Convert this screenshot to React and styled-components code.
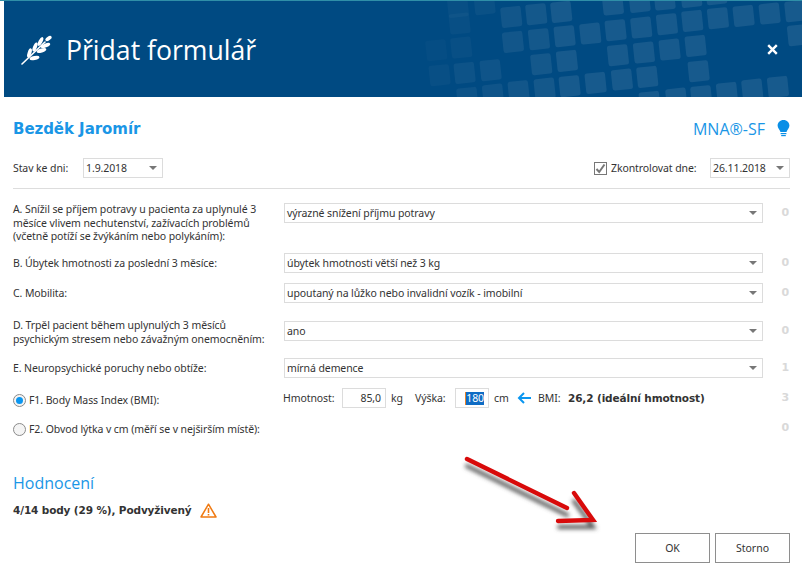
import React from "react";
import styled, { createGlobalStyle } from "styled-components";

const Global = createGlobalStyle`
  html, body { margin: 0; padding: 0; background: #fff; }
  body { font-family: "Noto Sans", sans-serif; font-size: 10.5px; letter-spacing: -0.09px; color: #333; }
`;
const Page = styled.div`
  position: relative; width: 802px; height: 572px; overflow: hidden; background: #fff;
  border-top: 1px solid #2f8fa8; box-sizing: border-box;
`;
const Header = styled.header`
  position: relative; margin-left: 4px; height: 96px; background: #004a82; overflow: hidden;
  display: flex; align-items: center; padding: 0 24px 0 17px; box-sizing: border-box; color: #fff;
`;
const Pattern = styled.svg`position: absolute; left: 0; top: 0;`;
const Title = styled.h1`
  position: relative; margin: 2px 0 0 13px; flex: 1; letter-spacing: 0; font: 400 26.6px/36px "Open Sans", sans-serif;
`;
const Close = styled.svg`position: relative; width: 11px; height: 11px;`;
const Content = styled.main`padding: 0 12px 0 13px;`;
const TopRow = styled.div`display: flex; justify-content: space-between; align-items: center; height: 61px; padding-top: 2px; box-sizing: border-box;`;
const Name = styled.div`font: 700 15px/20px "DejaVu Sans", sans-serif; color: #1a96e6; letter-spacing: -0.05px;`;
const Brand = styled.div`display: flex; align-items: center; gap: 12px; letter-spacing: 0; font: 400 16px/20px "Open Sans", sans-serif; color: #1a96e6;`;
const FilterRow = styled.div`
  display: flex; align-items: center; height: 20px; padding-bottom: 10px; border-bottom: 1px solid #ddd; margin-bottom: 14px;
`;
const Label = styled.span`white-space: nowrap; min-width: ${p => p.$w ?? 0}px; margin-left: ${p => p.$ml ?? 0}px;`;
const SelectBox = styled.div`
  display: flex; align-items: center; justify-content: space-between; box-sizing: border-box; height: 20px;
  width: ${p => p.$w ? p.$w + "px" : "auto"}; ${p => p.$w ? "" : "flex: 1;"}
  margin-left: ${p => p.$ml ?? 0}px; border: 1px solid #dcdcdc; padding: 0 4px 0 2px; color: #333;
`;
const Caret = styled.i`
  border-left: 4px solid transparent; border-right: 4px solid transparent; border-top: 4px solid #777; margin-right: 1px;
`;
const Check = styled.div`
  margin-left: auto; width: 13px; height: 13px; border: 1px solid #777; box-sizing: border-box; margin-right: 4px;
  display: flex; align-items: center; justify-content: center;
`;
const Row = styled.div`
  display: grid; grid-template-columns: 271px 479px 27px; height: ${p => p.$h}px; align-items: start;
`;
const Question = styled.div`
  line-height: 13.5px; margin-top: ${p => p.$mt ?? 0}px; white-space: nowrap;
`;
const Score = styled.div`
  font: 700 11px/20px "DejaVu Sans", sans-serif; color: #d9d9d9; text-align: right; padding-right: 1px;
`;
const RadioLabel = styled.label`display: flex; align-items: center; gap: 3px; height: 20px; margin-top: ${p => p.$mt ?? 0}px; white-space: nowrap;`;
const Radio = styled.span`
  width: 13px; height: 13px; border-radius: 50%; border: 1px solid #8a8a8a; box-sizing: border-box; background: #f4f4f4;
  display: flex; align-items: center; justify-content: center;
  &::after { content: ""; width: 7px; height: 7px; border-radius: 50%; background: ${p => p.$on ? "#0a96f0" : "transparent"}; }
`;
const Bmi = styled.div`display: flex; align-items: center; height: 20px; margin-left: -1px;`;
const NumBox = styled.div`
  box-sizing: border-box; height: 20px; width: ${p => p.$w}px; margin: 0 5px 0 0; border: 1px solid #dcdcdc;
  display: flex; align-items: center; justify-content: flex-end; padding-right: 4px;
`;
const Selected = styled.span`background: #0f6cc4; color: #fff; border-left: 1px solid #e8832a; line-height: 13px;`;
const Strong = styled.b`font: 700 10.5px/20px "DejaVu Sans", sans-serif; letter-spacing: -0.12px;`;
const ArrowLeft = styled.svg`margin: 0 7px 0 0;`;
const Section = styled.h2`
  margin: 24px 0 0; letter-spacing: 0; font: 400 16px/22px "Open Sans", sans-serif; color: #1a96e6;
`;
const Result = styled.div`display: flex; align-items: center; gap: 8px; margin-top: 6px; height: 20px; font: 700 10.5px/20px "DejaVu Sans", sans-serif; letter-spacing: -0.13px;`;
const Buttons = styled.footer`position: absolute; right: 12px; top: 532px; display: flex; gap: 5px;`;
const Button = styled.button`
  width: 75px; height: 30px; box-sizing: border-box; background: #fff; border: 1px solid #8e8e8e; color: #333;
  font: 400 10.5px "Noto Sans", sans-serif; padding: 0;
`;
const Arrow = styled.svg`position: absolute; left: 450px; top: 445px; overflow: visible;`;

const squares = [
  [145,40,.03],[75,120,.02],[150,112,.03],[85,195,.03],[160,188,.05],[238,180,.06],[168,263,.05],[245,253,.06],[322,243,.07],[400,235,.08],
  [300,20,.07],[375,12,.08],[450,5,.09],[305,95,.07],[383,87,.08],[460,78,.09],[537,70,.09],[613,60,.09],[690,52,.09],[767,42,.09],[843,32,.09],[920,24,.09],[997,17,.09],[1075,10,.09],[1152,3,.09],
  [620,135,.09],[698,127,.09],[775,118,.09],[853,107,.09],[1160,75,.09],[390,162,.08],[467,152,.09],[632,208,.09],[708,200,.09],[862,183,.09],
  [475,228,.09],[553,218,.09],[1100,230,.09],[1023,238,.09],[947,248,.09],[870,258,.09],[795,265,.09],[715,275,.09],
  [605,-17,.09],[685,-25,.09],[760,-32,.09],[840,-40,.09],[915,-48,.09],[220,-18,.04],[140,-10,.03],
];

const Wheat = () => (
  <svg width="32" height="32" viewBox="20 32 32 32" fill="#fff">
    <path d="M21 63 L44 41" stroke="#fff" strokeWidth="1.6" strokeLinecap="round" />
    <ellipse cx="47.5" cy="37.5" rx="3.6" ry="1.9" transform="rotate(-35 47.5 37.5)" />
    <ellipse cx="44.5" cy="44.5" rx="5" ry="2" transform="rotate(-22 44.5 44.5)" />
    <ellipse cx="40.5" cy="49.5" rx="5" ry="2" transform="rotate(-18 40.5 49.5)" />
    <ellipse cx="33.5" cy="57" rx="5" ry="2" transform="rotate(-12 33.5 57)" />
    <ellipse cx="39.5" cy="40.5" rx="4.8" ry="1.9" transform="rotate(-62 39.5 40.5)" />
    <ellipse cx="34" cy="46" rx="4.8" ry="1.9" transform="rotate(-68 34 46)" />
    <ellipse cx="28.5" cy="52" rx="4.8" ry="1.9" transform="rotate(-72 28.5 52)" />
  </svg>
);

const Select = ({ children, w, ml }) => (
  <SelectBox $w={w} $ml={ml}><span>{children}</span><Caret /></SelectBox>
);

export default function App() {
  return (
    <Page>
      <Global />
      <Header>
        <Pattern width="798" height="96" viewBox="0 0 798 96">
          {squares.map(([x, y, o], i) => (
            <rect key={i} x={397 + x / 3} y={y / 3 - 1} width="20.5" height="20.5" rx="2.5" fill="#fff" fillOpacity={o} transform={`rotate(-6 ${407 + x / 3} ${9 + y / 3})`} />
          ))}
        </Pattern>
        <Wheat />
        <Title>Přidat formulář</Title>
        <Close viewBox="0 0 11 11"><path d="M1.2 1.2 9.8 9.8M9.8 1.2 1.2 9.8" stroke="#fff" strokeWidth="2.4" /></Close>
      </Header>
      <Content>
        <TopRow>
          <Name>Bezděk Jaromír</Name>
          <Brand>
            MNA®-SF
            <svg width="13" height="17" viewBox="0 0 13 17" fill="#0a8fe6">
              <path d="M6.5 0C3 0 .6 2.5.6 5.6c0 2.6 2 3.9 2.9 6.4h6c.9-2.5 2.9-3.8 2.9-6.4C12.4 2.5 10 0 6.5 0Z" />
              <rect x="3.6" y="13" width="5.8" height="1.2" /><rect x="4.2" y="15" width="4.6" height="1.2" />
            </svg>
          </Brand>
        </TopRow>
        <FilterRow>
          <Label $w={70}>Stav ke dni:</Label>
          <Select w={80}>1.9.2018</Select>
          <Check>
            <svg width="11" height="11" viewBox="0 0 11 11"><path d="M1.5 6 4.2 9 9.5 1.5" fill="none" stroke="#777" strokeWidth="2" /></svg>
          </Check>
          <Label $w={99}>Zkontrolovat dne:</Label>
          <Select w={80}>26.11.2018</Select>
        </FilterRow>
        <Row $h={50}>
          <Question>A. Snížil se příjem potravy u pacienta za uplynulé 3<br />měsíce vlivem nechutenství, zažívacích problémů<br />(včetně potíží se žvýkáním nebo polykáním):</Question>
          <Select>výrazné snížení příjmu potravy</Select><Score>0</Score>
        </Row>
        <Row $h={30}>
          <Question $mt={4}>B. Úbytek hmotnosti za poslední 3 měsíce:</Question>
          <Select>úbytek hmotnosti větší než 3 kg</Select><Score>0</Score>
        </Row>
        <Row $h={38}>
          <Question $mt={4}>C. Mobilita:</Question>
          <Select>upoutaný na lůžko nebo invalidní vozík - imobilní</Select><Score>0</Score>
        </Row>
        <Row $h={37}>
          <Question $mt={-2}>D. Trpěl pacient během uplynulých 3 měsíců<br />psychickým stresem nebo závažným onemocněním:</Question>
          <Select>ano</Select><Score>0</Score>
        </Row>
        <Row $h={30}>
          <Question $mt={4}>E. Neuropsychické poruchy nebo obtíže:</Question>
          <Select>mírná demence</Select><Score>1</Score>
        </Row>
        <Row $h={30}>
          <RadioLabel $mt={2}><Radio $on /> F1. Body Mass Index (BMI):</RadioLabel>
          <Bmi>
            <Label $w={59}>Hmotnost:</Label><NumBox $w={44}>85,0</NumBox><Label $w={24}>kg</Label>
            <Label $w={40}>Výška:</Label><NumBox $w={34}><Selected>180</Selected></NumBox><Label $w={23}>cm</Label>
            <ArrowLeft width="14" height="12" viewBox="0 0 14 12"><path d="M14 6H2M7 1 2 6l5 5" fill="none" stroke="#0a96f0" strokeWidth="2" /></ArrowLeft>
            <Label $w={30}>BMI:</Label><Strong>26,2 (ideální hmotnost)</Strong>
          </Bmi>
          <Score>3</Score>
        </Row>
        <Row $h={30}>
          <RadioLabel $mt={1}><Radio /> F2. Obvod lýtka v cm (měří se v nejširším místě):</RadioLabel>
          <span /><Score>0</Score>
        </Row>
        <Section>Hodnocení</Section>
        <Result>
          4/14 body (29 %), Podvyživený
          <svg width="17" height="15" viewBox="0 0 17 15"><path d="M8.5 1.2 16 14H1Z" fill="#fff" stroke="#f07a12" strokeWidth="1.5" strokeLinejoin="round" /><path d="M8.5 5v5M8.5 11v1.6" stroke="#f07a12" strokeWidth="1.6" /></svg>
        </Result>
      </Content>
      <Arrow width="160" height="90" viewBox="450 445 160 90">
        <defs><filter id="s" x="-20%" y="-20%" width="140%" height="160%"><feGaussianBlur stdDeviation="2" /></filter></defs>
        <path d="M467 461 567 510M574 496 593 522H559" fill="none" stroke="#555" strokeWidth="4" strokeLinecap="round" filter="url(#s)" transform="translate(0 4)" />
        <path d="M467 458 567 507M574 492 593 519 558 520" fill="none" stroke="#d80a0a" strokeWidth="4.4" strokeLinecap="round" strokeLinejoin="miter" />
      </Arrow>
      <Buttons><Button>OK</Button><Button>Storno</Button></Buttons>
    </Page>
  );
}
